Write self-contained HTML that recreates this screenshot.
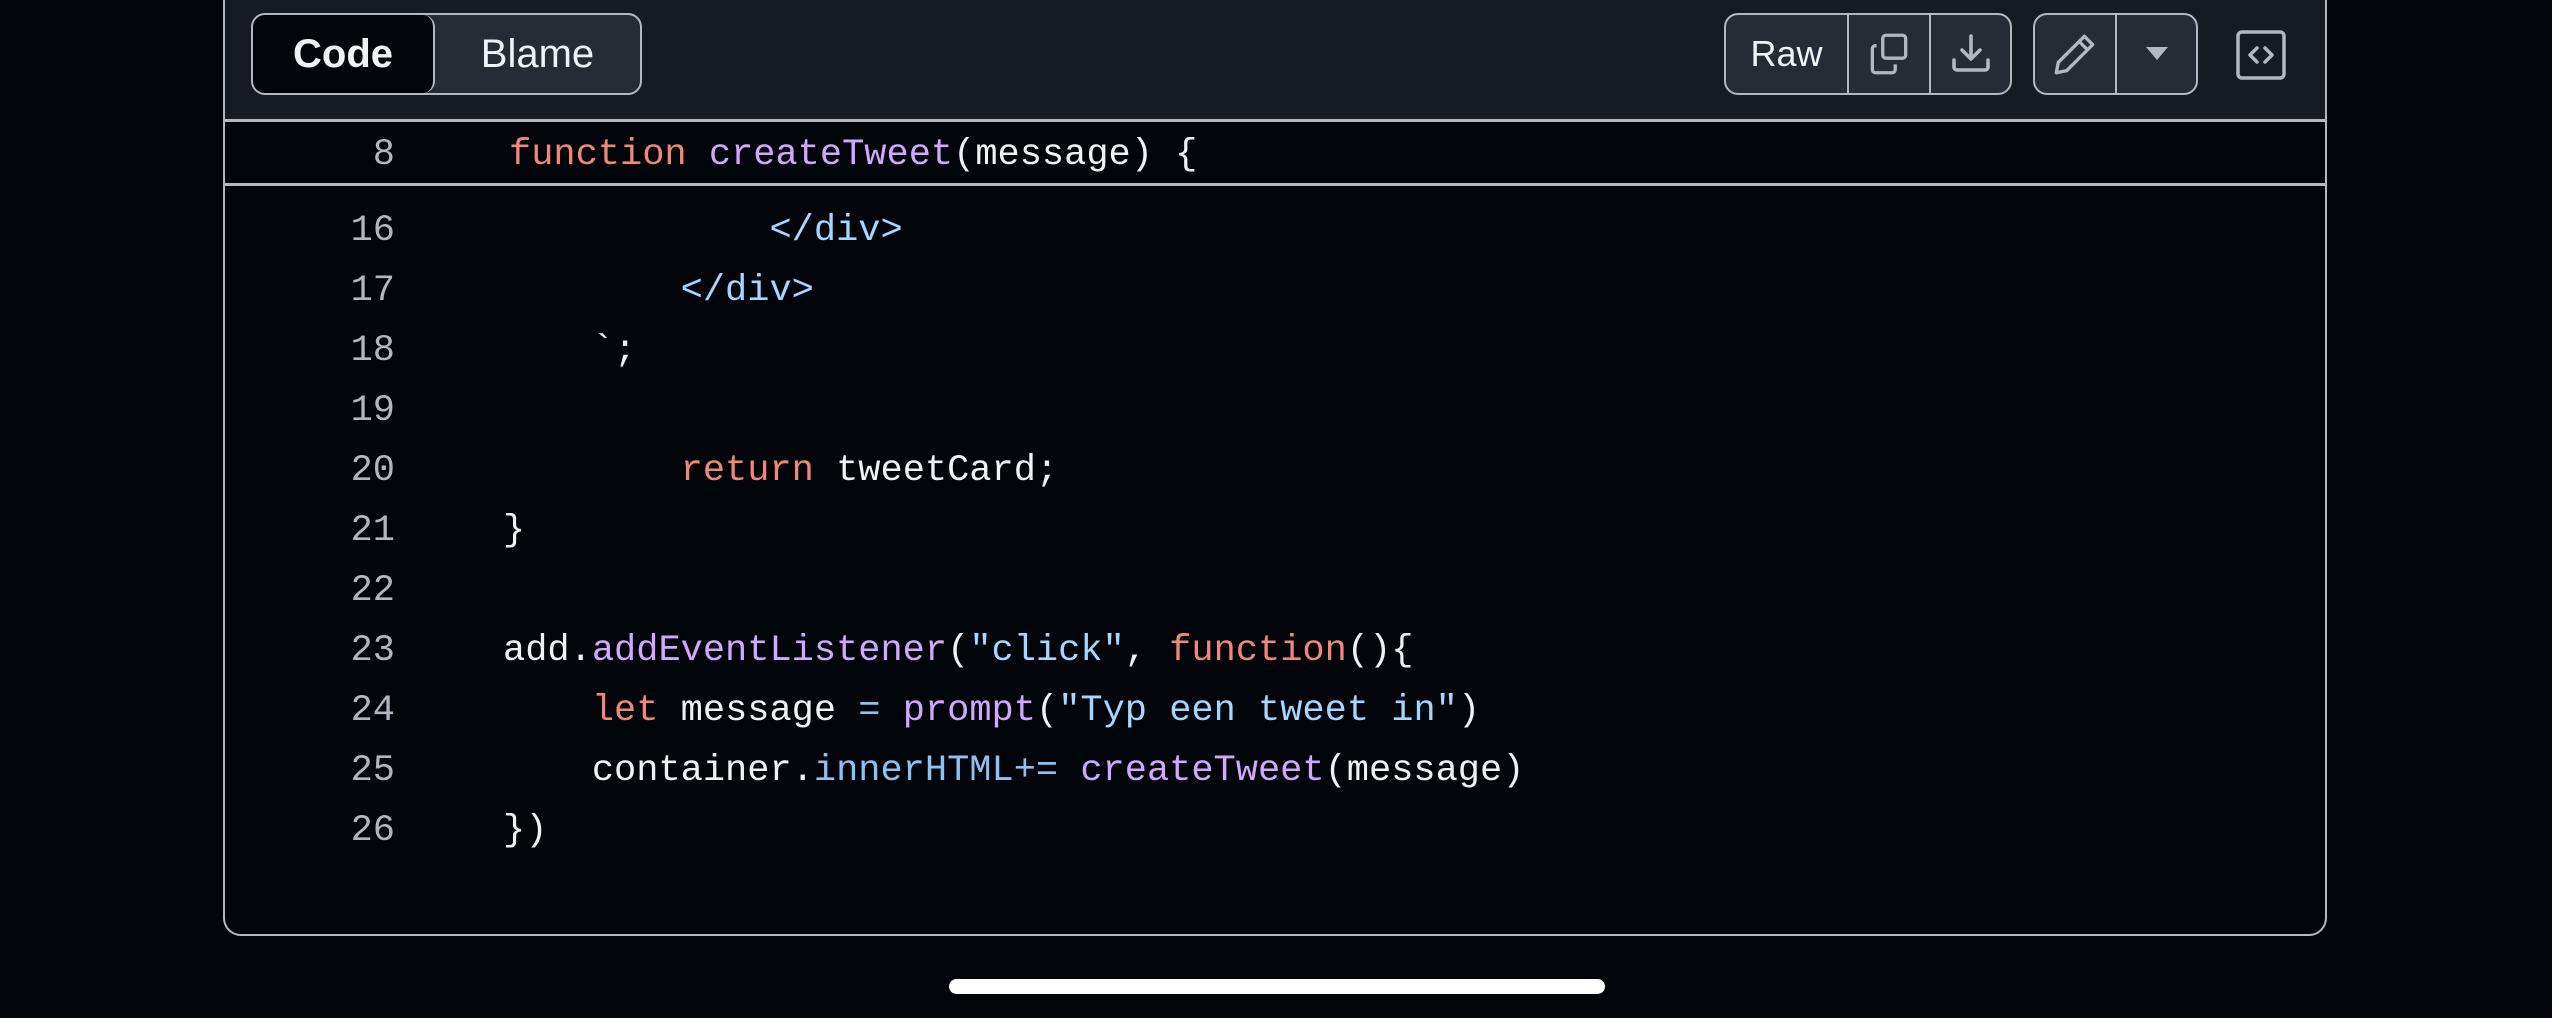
<!DOCTYPE html>
<html><head><meta charset="utf-8"><style>
*{margin:0;padding:0;box-sizing:border-box}
body{width:2552px;height:1018px;background:#010409;position:relative;overflow:hidden;font-family:"Liberation Sans",sans-serif}
.box{position:absolute;left:223px;top:-10px;width:2104px;height:946px;border:2px solid #b3b8c0;border-radius:0 0 18px 18px;overflow:hidden;background:#010409}
.hdr{position:absolute;left:0;top:0;width:100%;height:130px;background:#161b22;border-bottom:3px solid #b3b8c0}
.seg{position:absolute;top:21px;height:82px;border:2px solid #b3b8c0;border-radius:14px;background:#262c36;display:flex;overflow:hidden}
.seg div{display:flex;align-items:center;justify-content:center;color:#f0f3f6;border-right:2px solid #b3b8c0}
.seg div:last-child{border-right:none}
.sticky{position:absolute;left:0;top:133px;width:100%;height:61px;background:#010409;border-bottom:3px solid #b3b8c0}
.ln{position:absolute;width:130px;left:40px;text-align:right;color:#b1b7bf;font:37px/60px "Liberation Mono",monospace}
.cd{position:absolute;left:278px;color:#f0f3f6;font:37px/60px "Liberation Mono",monospace;white-space:pre}
.k{color:#f0877a}.f{color:#d2a8ff}.s{color:#a5d6ff}.b{color:#8fc1f0}
.home{position:absolute;left:949px;top:979px;width:656px;height:15px;border-radius:8px;background:#fff}
</style></head><body>
<div class="box">
 <div class="hdr">
  <div class="seg" style="left:26px;width:391px">
   <div style="width:182px;background:#010409;font-weight:bold;font-size:40px;border-radius:12px">Code</div>
   <div style="flex:1;font-size:40px">Blame</div>
  </div>
  <div class="seg" style="left:1499px;width:288px">
   <div style="width:123px;font-size:36px">Raw</div>
   <div style="width:82px"><svg width="50" height="50" viewBox="0 0 24 24" fill="none" stroke="#b3b8c0" stroke-width="1.6" stroke-linejoin="round"><rect x="9" y="3" width="11" height="11" rx="1.5"/><path d="M6 8H5.5A1.5 1.5 0 0 0 4 9.5v10A1.5 1.5 0 0 0 5.5 21h8a1.5 1.5 0 0 0 1.5-1.5V17"/></svg></div>
   <div style="flex:1"><svg width="48" height="48" viewBox="0 0 24 24" fill="none" stroke="#b3b8c0" stroke-width="1.8" stroke-linecap="round" stroke-linejoin="round"><path d="M12 3v11M7.5 10l4.5 4.5 4.5-4.5M3.5 15v3.5A1.5 1.5 0 0 0 5 20h14a1.5 1.5 0 0 0 1.5-1.5V15"/></svg></div>
  </div>
  <div class="seg" style="left:1808px;width:165px">
   <div style="width:82px"><svg width="50" height="50" viewBox="0 0 24 24" fill="none" stroke="#b3b8c0" stroke-width="1.6" stroke-linejoin="round"><path d="M16.5 3.5l4 4L8 20l-5 1 1-5z M14 6l4 4"/></svg></div>
   <div style="flex:1"><svg width="22" height="14" viewBox="0 0 22 14"><path d="M0 0h22L11 13z" fill="#b3b8c0"/></svg></div>
  </div>
  <svg style="position:absolute;left:2011px;top:38px" width="50" height="50" viewBox="0 0 50 50" fill="none" stroke="#b3b8c0" stroke-width="3.5" stroke-linejoin="round"><rect x="2" y="2" width="46" height="46" rx="4"/><path d="M21 18l-7 7 7 7M29 18l7 7-7 7" stroke-linecap="round"/></svg>
 </div>
 <div class="sticky">
  <div class="ln" style="top:0">8</div>
  <div class="cd" style="top:0;left:284px"><span class="k">function</span> <span class="f">createTweet</span>(message) {</div>
 </div>
 <div class="ln" style="top:209px">16</div><div class="cd" style="top:209px">            <span class="s">&lt;/div&gt;</span></div>
 <div class="ln" style="top:269px">17</div><div class="cd" style="top:269px">        <span class="s">&lt;/div&gt;</span></div>
 <div class="ln" style="top:329px">18</div><div class="cd" style="top:329px">    `;</div>
 <div class="ln" style="top:389px">19</div>
 <div class="ln" style="top:449px">20</div><div class="cd" style="top:449px">        <span class="k">return</span> tweetCard;</div>
 <div class="ln" style="top:509px">21</div><div class="cd" style="top:509px">}</div>
 <div class="ln" style="top:569px">22</div>
 <div class="ln" style="top:629px">23</div><div class="cd" style="top:629px">add.<span class="f">addEventListener</span>(<span class="s">"click"</span>, <span class="k">function</span>(){</div>
 <div class="ln" style="top:689px">24</div><div class="cd" style="top:689px">    <span class="k">let</span> message <span class="b">=</span> <span class="f">prompt</span>(<span class="s">"Typ een tweet in"</span>)</div>
 <div class="ln" style="top:749px">25</div><div class="cd" style="top:749px">    container.<span class="b">innerHTML+=</span> <span class="f">createTweet</span>(message)</div>
 <div class="ln" style="top:809px">26</div><div class="cd" style="top:809px">})</div>
</div>
<div class="home"></div>
</body></html>
